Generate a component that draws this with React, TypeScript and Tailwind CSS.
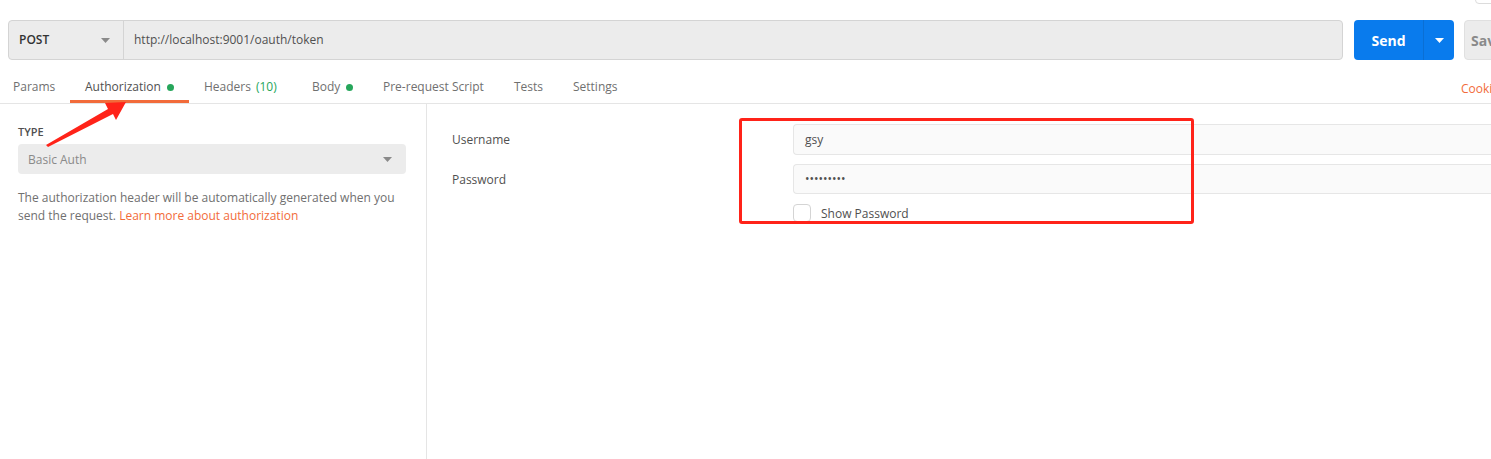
const tabs = [
  { label: "Params", w: "w-[70px]", pl: "pl-[13px]" },
  { label: "Authorization", w: "w-[119px]", pl: "pl-[15px]", active: true, dot: true },
  { label: "Headers", w: "w-[108px]", pl: "pl-[15px]", count: "(10)" },
  { label: "Body", w: "w-[71px]", pl: "pl-[15px]", dot: true },
  { label: "Pre-request Script", w: "w-[131px]", pl: "pl-[15px]" },
  { label: "Tests", w: "w-[59px]", pl: "pl-[15px]" },
  { label: "Settings", w: "w-[90px]", pl: "pl-[15px]" },
];

function Caret({ className }: { className?: string }) {
  return (
    <svg width="9" height="5" viewBox="0 0 9 5" className={className}>
      <path d="M0 0h9L4.5 5z" fill="currentColor" />
    </svg>
  );
}

export default function App() {
  return (
    <div className="relative w-[1491px] h-[459px] overflow-hidden bg-white font-['Open_Sans',sans-serif] text-[12px] text-[#505050]">
      {/* corner of a toolbar box above */}
      <div className="absolute left-[1475px] top-[-12px] w-[40px] h-[16px] rounded border border-[#dcdcdc]" />

      {/* request bar */}
      <div className="flex items-stretch h-10 mt-5 pl-2">
        <div className="flex w-[1335px] shrink-0 rounded border border-[#d4d4d4] bg-[#ececec]">
          <div className="flex items-center justify-between w-[115px] pl-[10px] pr-[13px] border-r border-[#d4d4d4] text-[#333] text-[12px] font-semibold">
            <span>POST</span>
            <Caret className="text-[#8a8a8a]" />
          </div>
          <div className="flex items-center pl-[10px] text-[#505050] text-[12px]">
            http://localhost:9001/oauth/token
          </div>
        </div>
        <div className="flex shrink-0 ml-[11px] w-[100px] rounded bg-[#097bed] text-white">
          <div className="flex items-center justify-center w-[69px] text-[14px] font-bold">Send</div>
          <div className="flex items-center justify-center flex-1 border-l border-[#0a6fd4]">
            <Caret />
          </div>
        </div>
        <div className="flex shrink-0 items-center ml-[10px] w-[80px] rounded border border-[#e0e0e0] bg-[#ececec] pl-[6px] text-[14px] font-bold text-[#8a8a8a]">
          Save
        </div>
      </div>

      {/* tabs */}
      <div className="flex h-[44px] border-b border-[#e5e5e5]">
        {tabs.map((t) => (
          <div
            key={t.label}
            className={`${t.w} ${t.pl} shrink-0 flex items-center h-full pt-[14px] border-b-[3px] ${
              t.active ? "border-[#f26b3a] text-[#505050]" : "border-transparent text-[#707070]"
            } ${t.label === "Params" ? "text-[#505050]" : ""}`}
          >
            <span>{t.label}</span>
            {t.count && <span className="ml-[5px] text-[#26a65b]">{t.count}</span>}
            {t.dot && <span className="ml-[6px] w-[7px] h-[7px] rounded-full bg-[#26a65b]" />}
          </div>
        ))}
        <div className="w-[813px] shrink-0" />
        <div className="flex shrink-0 items-center pt-[14px] text-[#f26b3a] w-[60px] whitespace-nowrap">Cookies</div>
      </div>

      {/* content */}
      <div className="flex h-[356px]">
        <div className="w-[427px] shrink-0 border-r border-[#e5e5e5] pl-[18px] pr-[20px] pt-[20px]">
          <div className="text-[11px] font-semibold text-[#505050] leading-[16px]">TYPE</div>
          <div className="flex items-center justify-between h-[30px] mt-[4px] rounded bg-[#ececec] pl-[10px] pr-[14px] text-[#8a8a8a]">
            <span className="pt-[1px]">Basic Auth</span>
            <Caret className="text-[#8a8a8a]" />
          </div>
          <p className="mt-[15px] leading-[18px] text-[#707070]">
            The authorization header will be automatically generated when you send the request.{" "}
            <span className="text-[#f26b3a]">Learn more about authorization</span>
          </p>
        </div>

        <div className="flex-1 pt-[20px]">
          <div className="flex items-center h-[31px]">
            <div className="w-[366px] pl-[25px] text-[#505050]">Username</div>
            <div className="flex-1 h-full flex items-center pl-[11px] rounded-l border border-r-0 border-[#e6e6e6] bg-[#fafafa] text-[#505050]">
              gsy
            </div>
          </div>
          <div className="flex items-center h-[30px] mt-[9px]">
            <div className="w-[366px] pl-[25px] pt-[1px] text-[#505050]">Password</div>
            <div className="flex-1 h-full flex items-center pl-[11px] rounded-l border border-r-0 border-[#e6e6e6] bg-[#fafafa] text-[#505050] tracking-[0px]">
              •••••••••
            </div>
          </div>
          <div className="flex items-center h-[18px] mt-[10px] pl-[366px]">
            <div className="w-[18px] h-[18px] rounded-sm border border-[#d4d4d4] bg-white" />
            <span className="ml-[10px] pt-[1px] text-[#505050]">Show Password</span>
          </div>
        </div>
      </div>

      {/* annotations */}
      <div className="absolute left-[739px] top-[118px] w-[455px] h-[106px] rounded-[3px] border-[3px] border-[#ff2319]" />
      <svg className="absolute left-0 top-0" width="140" height="160" viewBox="0 0 140 160">
        <polygon points="46,145 108,109 105,103 126,102 116,120 113,114 48,147" fill="#ff2319" />
      </svg>
    </div>
  );
}
